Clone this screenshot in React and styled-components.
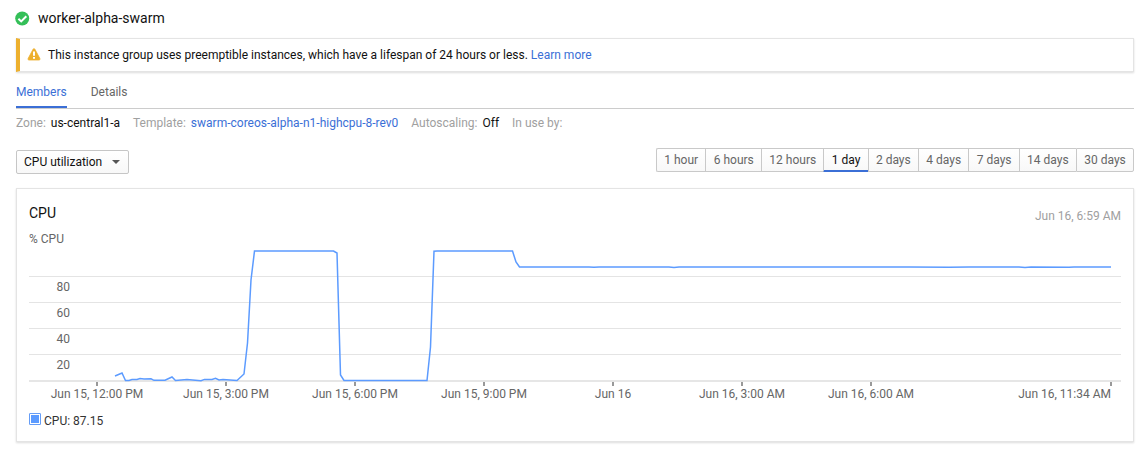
import React from "react";
import styled, { createGlobalStyle } from "styled-components";

const GlobalStyle = createGlobalStyle`
  * { box-sizing: border-box; }
  body {
    margin: 0;
    background: #fff;
    color: #111;
    font: 12px/16px Roboto, "Liberation Sans", sans-serif;
  }
  button, select { font: inherit; }
`;

const Page = styled.main`
  padding: 8px 13px 16px 16px;
`;

const TitleRow = styled.header`
  display: flex;
  align-items: center;
  gap: 8px;
  margin-left: -1px;
`;

const Title = styled.h1`
  margin: 0;
  font-size: 14px;
  line-height: 20px;
  font-weight: 400;
`;

const Alert = styled.div`
  display: flex;
  align-items: center;
  gap: 7px;
  margin-top: 10px;
  padding: 8px 8px 8px 7px;
  border: 1px solid #e4e4e4;
  border-left: 4px solid #edb02e;
  box-shadow: 0 1px 2px rgba(0, 0, 0, 0.14);
`;

const Link = styled.a`
  color: #3b6fd6;
  text-decoration: none;
`;

const Tabs = styled.nav`
  display: flex;
  gap: 24px;
  margin-top: 12px;
  border-bottom: 1px solid #ccc;
`;

const Tab = styled.button`
  height: 24px;
  padding: 0 0 8px;
  border: 0;
  border-bottom: 2px solid ${(p) => (p.$active ? "#3b6fd6" : "transparent")};
  background: none;
  color: ${(p) => (p.$active ? "#3b6fd6" : "#666")};
`;

const Meta = styled.dl`
  display: flex;
  flex-wrap: wrap;
  gap: 13px;
  margin: 6px 0 0;
`;

const MetaItem = styled.div`
  display: flex;
  gap: 5px;
`;

const MetaLabel = styled.dt`
  color: #a0a0a0;
`;

const MetaValue = styled.dd`
  margin: 0;
`;

const Controls = styled.div`
  display: flex;
  justify-content: space-between;
  align-items: flex-start;
  margin-top: 17px;
`;

const SelectBox = styled.label`
  display: flex;
  align-items: center;
  position: relative;
  margin-top: 2px;
`;

const Select = styled.select`
  height: 24px;
  padding: 0 25px 0 7px;
  border: 1px solid #c6c6c6;
  border-radius: 2px;
  appearance: none;
  background: linear-gradient(#fff, #f8f8f8);
  color: #111;
`;

const Caret = styled.svg`
  position: absolute;
  right: 9px;
  pointer-events: none;
`;

const Ranges = styled.div`
  display: flex;
  min-width: 478px;
`;

const Range = styled.button`
  flex: 1 1 auto;
  height: 24px;
  padding: 0 7px;
  border: 1px solid #c9c9c9;
  border-right-width: 0;
  background: linear-gradient(#fff, #f8f8f8);
  color: ${(p) => (p.$active ? "#111" : "#666")};
  box-shadow: ${(p) => (p.$active ? "inset 0 -1px #3b6fd6" : "none")};
  border-bottom-color: ${(p) => (p.$active ? "#3b6fd6" : "#c9c9c9")};
  &:first-child { border-radius: 2px 0 0 2px; }
  &:last-child { border-right-width: 1px; border-radius: 0 2px 2px 0; }
`;

const Card = styled.section`
  margin-top: 14px;
  padding: 14px 12px 12px;
  border: 1px solid #e4e4e4;
  box-shadow: 0 1px 2px rgba(0, 0, 0, 0.14);
`;

const CardHead = styled.div`
  display: flex;
  justify-content: space-between;
  align-items: flex-end;
`;

const CardTitle = styled.h2`
  margin: 0;
  font-size: 14px;
  line-height: 20px;
  font-weight: 400;
`;

const Stamp = styled.time`
  line-height: 14px;
  color: #a0a0a0;
`;

const Unit = styled.div`
  margin: 8px 0 1px;
  color: #666;
`;

const Plot = styled.svg`
  display: block;
  width: 100%;
  height: auto;
  font-size: 12px;
  fill: #666;
`;

const Legend = styled.div`
  display: flex;
  align-items: flex-start;
  gap: 3px;
  margin-top: 7px;
  color: #333;
`;

const Swatch = styled.span`
  width: 12px;
  height: 12px;
  border: 1px solid #669df6;
  border-radius: 1px;
  background: #5c9bff;
  box-shadow: inset 0 0 0 1px #fff;
`;

const RANGES = ["1 hour", "6 hours", "12 hours", "1 day", "2 days", "4 days", "7 days", "14 days", "30 days"];

const GRID = [
  { y: 28, label: "80" },
  { y: 54, label: "60" },
  { y: 80, label: "40" },
  { y: 106, label: "20" },
];

const TICKS = [
  { x: 68, label: "Jun 15, 12:00 PM" },
  { x: 197, label: "Jun 15, 3:00 PM" },
  { x: 326, label: "Jun 15, 6:00 PM" },
  { x: 455, label: "Jun 15, 9:00 PM" },
  { x: 584, label: "Jun 16" },
  { x: 713, label: "Jun 16, 3:00 AM" },
  { x: 842, label: "Jun 16, 6:00 AM" },
  { x: 1082, label: "Jun 16, 11:34 AM", anchor: "end" },
];

const CPU_LINE = `86,128 93,125 96.5,132.5 100,132.5 103,131.5 108,131.5 111,130.5 115,131 122,130.8
  125,132.3 136,132.3 143,129 146.5,132.5 158,131.4 172,132.7 175.5,131.4 183,131.5 186.5,130.4
  190,132 194,131.4 208,132.5 215,126 218.5,95 222,32 225.5,3 304.5,3 308,5 311.5,127 315,132.5
  398,132.5 401.5,99 405,3.3 408,3 483.5,3 487,14 490.5,19 560,19 565,19.3 570,19 640,19 645,19.4
  650,19 790,19 880,19 920,19.3 940,19 990,19 996,19.6 1002,19 1040,19.2 1045,19 1082,19`;

export default function App() {
  return (
    <>
      <GlobalStyle />
      <Page>
        <TitleRow>
          <svg width="15" height="15" viewBox="0 0 15 15" aria-hidden="true">
            <circle cx="7.2" cy="7.5" r="7" fill="#34bf58" />
            <path d="M3.4 7.7 6.2 10.4 11.3 5.2" fill="none" stroke="#fff" strokeWidth="2" />
          </svg>
          <Title>worker-alpha-swarm</Title>
        </TitleRow>

        <Alert>
          <svg width="14" height="14" viewBox="0 0 14 14" aria-hidden="true">
            <path
              d="M6.1 1.2a1 1 0 0 1 1.8 0l5 9.4a1 1 0 0 1-.9 1.4H2a1 1 0 0 1-.9-1.4z"
              fill="#edb02e"
              stroke="#edb02e"
              strokeWidth="0.8"
            />
            <path d="M6 3.6h2v4.2H6zM6 9h2v1.8H6z" fill="#fff" />
          </svg>
          <span>
            This instance group uses preemptible instances, which have a lifespan of 24 hours or less.{" "}
            <Link href="#learn">Learn more</Link>
          </span>
        </Alert>

        <Tabs>
          <Tab $active>Members</Tab>
          <Tab>Details</Tab>
        </Tabs>

        <Meta>
          <MetaItem>
            <MetaLabel>Zone:</MetaLabel>
            <MetaValue>us-central1-a</MetaValue>
          </MetaItem>
          <MetaItem>
            <MetaLabel>Template:</MetaLabel>
            <MetaValue>
              <Link href="#template">swarm-coreos-alpha-n1-highcpu-8-rev0</Link>
            </MetaValue>
          </MetaItem>
          <MetaItem>
            <MetaLabel>Autoscaling:</MetaLabel>
            <MetaValue>Off</MetaValue>
          </MetaItem>
          <MetaItem>
            <MetaLabel>In use by:</MetaLabel>
          </MetaItem>
        </Meta>

        <Controls>
          <SelectBox>
            <Select aria-label="Metric">
              <option>CPU utilization</option>
            </Select>
            <Caret width="8" height="4" viewBox="0 0 8 4" aria-hidden="true">
              <path d="M0 0h8L4 4z" fill="#555" />
            </Caret>
          </SelectBox>
          <Ranges>
            {RANGES.map((label) => (
              <Range key={label} $active={label === "1 day"}>
                {label}
              </Range>
            ))}
          </Ranges>
        </Controls>

        <Card>
          <CardHead>
            <CardTitle>CPU</CardTitle>
            <Stamp>Jun 16, 6:59 AM</Stamp>
          </CardHead>
          <Unit>% CPU</Unit>
          <Plot viewBox="0 0 1092 158" role="img" aria-label="CPU utilization over one day">
            {GRID.map(({ y, label }) => (
              <g key={label}>
                <rect x="0" y={y} width="1092" height="1" fill="#e4e4e4" />
                <text x="41" y={y + 15} textAnchor="end">
                  {label}
                </text>
              </g>
            ))}
            <rect x="0" y="132" width="1092" height="2" fill="#e6e6e6" />
            {TICKS.map(({ x, label, anchor }) => (
              <g key={label}>
                <rect x={x - 1} y="134" width="2" height="4" fill="#999" />
                <text x={x} y="150" textAnchor={anchor || "middle"}>
                  {label}
                </text>
              </g>
            ))}
            <polyline points={CPU_LINE} fill="none" stroke="#5c9bff" strokeWidth="1.5" />
          </Plot>
          <Legend>
            <Swatch />
            <span>CPU: 87.15</span>
          </Legend>
        </Card>
      </Page>
    </>
  );
}
